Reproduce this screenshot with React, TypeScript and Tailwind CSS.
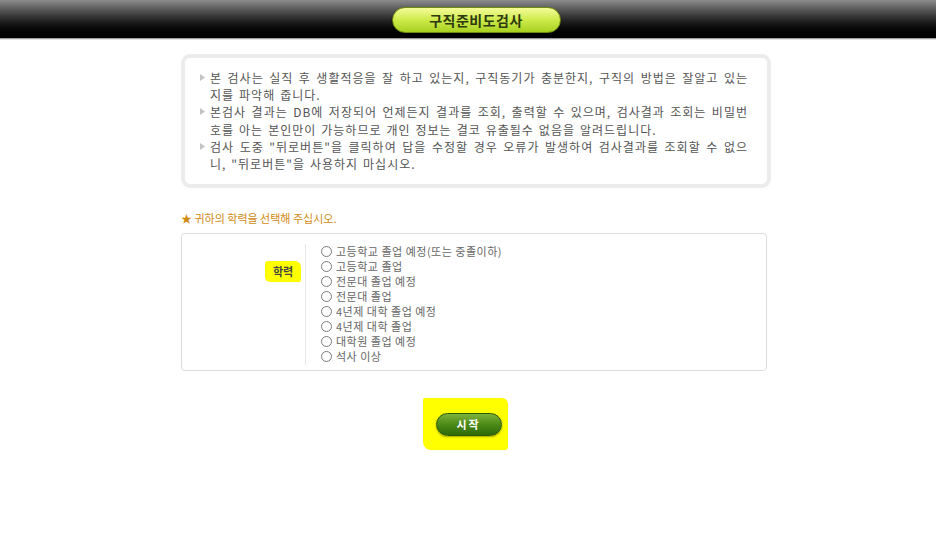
import React, { useState } from 'react';

const font = "font-['Noto_Sans_CJK_KR','Noto_Sans',sans-serif]";

const notices: string[][] = [
  ['본 검사는 실직 후 생활적응을 잘 하고 있는지, 구직동기가 충분한지, 구직의 방법은 잘알고 있는', '지를 파악해 줍니다.'],
  ['본검사 결과는 DB에 저장되어 언제든지 결과를 조회, 출력할 수 있으며, 검사결과 조회는 비밀번', '호를 아는 본인만이 가능하므로 개인 정보는 결코 유출될수 없음을 알려드립니다.'],
  ['검사 도중 "뒤로버튼"을 클릭하여 답을 수정할 경우 오류가 발생하여 검사결과를 조회할 수 없으', '니, "뒤로버튼"을 사용하지 마십시오.'],
];

const options = [
  '고등학교 졸업 예정(또는 중졸이하)',
  '고등학교 졸업',
  '전문대 졸업 예정',
  '전문대 졸업',
  '4년제 대학 졸업 예정',
  '4년제 대학 졸업',
  '대학원 졸업 예정',
  '석사 이상',
];

const Bullet = () => (
  <svg width="5" height="7" viewBox="0 0 5 7" className="mt-[5px] shrink-0">
    <path d="M0 0 L5 3.5 L0 7 Z" fill="#c4c4c4" />
  </svg>
);

const App = (): JSX.Element => {
  const [selected, setSelected] = useState<number | null>(null);

  return (
    <div className={`min-h-[546px] bg-white ${font}`}>
      {/* Top bar */}
      <header className="h-[39px] bg-gradient-to-b from-[#8c8c8c] via-[#1a1a1a] via-60% to-black border-b border-[#9a9a9a]">
        <div className="ml-[181px] w-[590px] flex justify-center pt-[7px]">
          <div className="w-[169px] h-[26px] rounded-full border border-[#6f8c12] bg-gradient-to-b from-[#f5fb96] via-[#cdea48] to-[#a9d11f] flex items-center justify-center shadow-[0_1px_2px_rgba(0,0,0,0.6)]">
            <span className="text-[14px] font-bold text-[#2e3a10] tracking-[0.5px] leading-none">구직준비도검사</span>
          </div>
        </div>
      </header>
      <div className="h-px bg-[#e4e4e4]" />

      <main className="ml-[181px] w-[590px]">
        {/* Notice box */}
        <section className="mt-[14px] border-[4px] border-[#ececec] rounded-[9px] pt-[11px] pb-[12px] pl-[15px] pr-[19px]">
          <div className="flex flex-col">
            {notices.map((lines, i) => (
              <div key={i} className="flex gap-[5px]">
                <Bullet />
                <div className="flex-1 min-w-0 text-[12px] leading-[17.2px] text-[#555] tracking-[1px] [word-spacing:1.3px]">
                  <div className="whitespace-nowrap text-justify [text-align-last:justify]">{lines[0]}</div>
                  <div className="whitespace-nowrap">{lines[1]}</div>
                </div>
              </div>
            ))}
          </div>
        </section>

        <p className="mt-[23px] text-[11px] leading-[14px] text-[#d08a12]">★ 귀하의 학력을 선택해 주십시오.</p>

        {/* Education options */}
        <section className="mt-[8px] w-[586px] border border-[#dcdcdc] rounded-[4px] flex pt-[10px] pb-[5px]">
          <div className="w-[124px] border-r border-[#e6e6e6] flex justify-end pr-[4px] pt-[17px]">
            <div className="h-[21px] w-[36px] bg-[#ffff00] rounded-[3px_6px_2px_5px] flex items-center justify-center">
              <span className="text-[11px] font-bold text-[#444] leading-none">학력</span>
            </div>
          </div>
          <div className="flex flex-col pl-[15px] pb-[1px]">
            {options.map((opt, i) => (
              <label key={i} className="flex items-center gap-[4px] h-[15px] cursor-pointer" onClick={() => setSelected(i)}>
                <span className="w-[11px] h-[11px] rounded-full border border-[#7a7a7a] bg-white flex items-center justify-center">
                  {selected === i && <span className="w-[5px] h-[5px] rounded-full bg-[#333]" />}
                </span>
                <span className="text-[11px] leading-none text-[#666] tracking-[0.5px]">{opt}</span>
              </label>
            ))}
          </div>
        </section>

        {/* Start button */}
        <div className="flex justify-center mt-[27px] pr-[22px]">
          <div className="w-[85px] h-[52px] bg-[#ffff00] rounded-[2px_6px_3px_8px] flex items-center pl-[13px]">
            <button className="w-[66px] h-[23px] rounded-full border border-[#2b5708] bg-gradient-to-b from-[#7db33a] via-[#4c8a16] to-[#2f6a08] text-white text-[11px] font-bold tracking-[2px] leading-none shadow-[0_1px_2px_rgba(0,0,0,0.35)]">
              시작
            </button>
          </div>
        </div>
      </main>
    </div>
  );
};

export default App;
